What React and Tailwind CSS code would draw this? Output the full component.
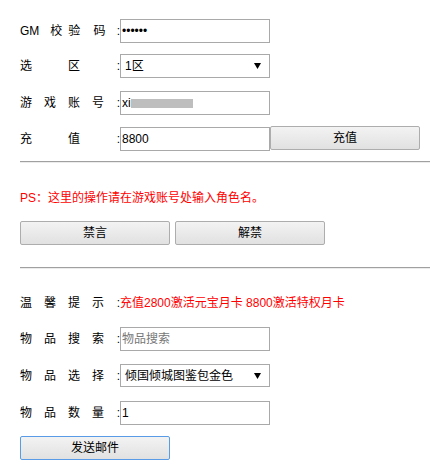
import React from 'react';

// label: 4 cells of 24px, letters spread with tracking
const Label = ({ children, className = '' }) => (
  <span className={`inline-block w-[96px] whitespace-pre tracking-[12px] ${className}`}>{children}</span>
);

const Colon = () => <span className="inline-block w-[4px] text-right">:</span>;

const Row = ({ label, children, className = '' }) => (
  <div className={`flex items-center ${className}`}>
    {label}
    <Colon />
    {children}
  </div>
);

const Box = ({ children, className = '' }) => (
  <div className={`w-[150px] h-6 border border-[#a9a9a9] bg-white flex items-center px-[1px] ${className}`}>
    {children}
  </div>
);

const Arrow = () => (
  <svg width="7" height="6" viewBox="0 0 7 6" className="shrink-0">
    <path d="M0 0 H7 L3.5 6 Z" fill="#000" />
  </svg>
);

const Button = ({ children, className = '' }) => (
  <button
    className={`w-[150px] h-6 border rounded-[2px] bg-gradient-to-b from-[#f3f3f3] to-[#e1e1e1] text-[12px] text-black ${className}`}
  >
    {children}
  </button>
);

const Rule = ({ className = '' }) => (
  <div className={`border-t border-[#a0a0a0] border-b border-b-[#ececec] ${className}`} />
);

export default function App() {
  return (
    <div className="min-h-screen bg-white pl-5 pr-px pt-[19px] text-[12px] leading-4 text-black font-['Liberation_Sans','Noto_Sans_CJK_SC',sans-serif]">
      {/* account section */}
      <Row
        label={
          <span className="inline-block w-[96px] whitespace-nowrap">
            GM<span className="ml-[11px]">校</span>
            <span className="ml-[6px]">验</span>
            <span className="ml-[13px]">码</span>
          </span>
        }
      >
        <input
          type="password"
          readOnly
          value="123456"
          className="w-[150px] h-6 border border-[#a9a9a9] px-[1px] text-[12px] outline-none"
        />
      </Row>

      <Row label={<Label>选　区</Label>} className="mt-[11px]">
        <Box className="justify-between pl-[4px] pr-[8px]">
          <span>1区</span>
          <Arrow />
        </Box>
      </Row>

      <Row label={<Label>游戏账号</Label>} className="mt-[13px]">
        <Box>
          <span>xi</span>
          <span className="inline-block w-[62px] h-[9px] bg-[#bebebe]" />
        </Box>
      </Row>

      <Row label={<Label>充　值</Label>} className="mt-[12px]">
        <Box>8800</Box>
        <Button className="-mt-[2px] border-[#adadad]">充值</Button>
      </Row>

      <Rule className="mt-[10px]" />

      {/* ban section */}
      <p className="mt-[27px] text-[#ff0000]">PS：这里的操作请在游戏账号处输入角色名。</p>

      <div className="mt-[15px] flex gap-[5px]">
        <Button className="border-[#adadad]">禁言</Button>
        <Button className="border-[#adadad]">解禁</Button>
      </div>

      <Rule className="mt-[22px]" />

      {/* mail section */}
      <Row label={<Label>温馨提示</Label>} className="mt-[26px]">
        <span className="text-[#ff0000]">充值2800激活元宝月卡 8800激活特权月卡</span>
      </Row>

      <Row label={<Label>物品搜索</Label>} className="mt-[16px]">
        <input
          type="text"
          readOnly
          placeholder="物品搜索"
          className="w-[150px] h-6 border border-[#a9a9a9] px-[1px] text-[12px] outline-none placeholder:text-[#777]"
        />
      </Row>

      <Row label={<Label>物品选择</Label>} className="mt-[13px]">
        <Box className="h-[23px] justify-between pl-[4px] pr-[8px]">
          <span>倾国倾城图鉴包金色</span>
          <Arrow />
        </Box>
      </Row>

      <Row label={<Label>物品数量</Label>} className="mt-[14px]">
        <Box>1</Box>
      </Row>

      <Button className="mt-[11px] border-[#5a9be8]">发送邮件</Button>
    </div>
  );
}
